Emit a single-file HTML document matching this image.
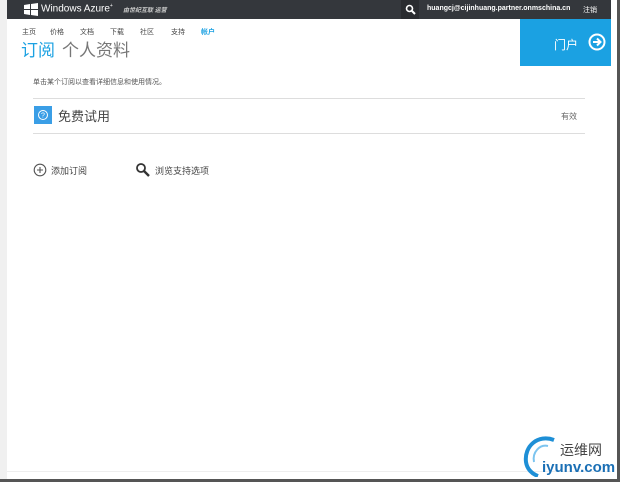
<!DOCTYPE html>
<html><head><meta charset="utf-8"><style>
body{margin:0;width:624px;height:484px;background:#fff;position:relative;overflow:hidden;font-family:"Liberation Sans","Noto Sans CJK SC",sans-serif;}
.a{position:absolute;white-space:nowrap;}
</style></head><body>
<div class="a" style="left:0;top:0;width:7px;height:480px;background:#f0f0f0;"></div>
<div class="a" style="left:7px;top:0;width:604px;height:19px;background:#34373c;"></div>
<div class="a" style="left:617px;top:0;width:3px;height:482px;background:#555;"></div>
<div class="a" style="left:0;top:479px;width:620px;height:3px;background:#555;"></div>
<div class="a" style="left:7px;top:471px;width:604px;height:1px;background:#eee;"></div>
<svg class="a" style="left:24px;top:3px" width="14" height="13" viewBox="0 0 14 13"><path d="M0 2l6-1v5H0zM7 1l7-1v6H7zM0 7h6v5l-6-1zM7 7h7v6l-7-1z" fill="#fff"/></svg>
<div class="a" style="left:41px;top:3px;font-size:10px;color:#fff;">Windows Azure<sup style="font-size:5px">+</sup></div>
<div class="a" style="left:123px;top:5px;font-size:6px;color:#ccc;font-style:italic;font-weight:bold;">由世纪互联 运营</div>
<div class="a" style="left:401px;top:0;width:18px;height:19px;background:#2a2c30;"></div>
<svg class="a" style="left:405px;top:4px" width="11" height="11"><circle cx="4.5" cy="4.5" r="3" stroke="#fff" stroke-width="1.6" fill="none"/><path d="M7 7l3 3" stroke="#fff" stroke-width="2"/></svg>
<div class="a" style="left:427px;top:5px;font-size:7px;color:#fff;font-weight:bold;">huangcj@cijinhuang.partner.onmschina.cn</div>
<div class="a" style="left:583px;top:5px;font-size:7px;color:#fff;">注销</div>
<div class="a" style="left:520px;top:19px;width:91px;height:47px;background:#1ba1e2;"></div>
<div class="a" style="left:554px;top:36px;font-size:12px;color:#fff;">门户</div>
<svg class="a" style="left:588px;top:33px" width="18" height="18"><circle cx="9" cy="9" r="7.5" stroke="#fff" stroke-width="2" fill="none"/><path d="M5 9h7M9 5.5L12.5 9 9 12.5" stroke="#fff" stroke-width="2" fill="none"/></svg>
<div class="a" style="left:22px;top:27px;font-size:7px;color:#444;">主页</div>
<div class="a" style="left:50px;top:27px;font-size:7px;color:#444;">价格</div>
<div class="a" style="left:80px;top:27px;font-size:7px;color:#444;">文档</div>
<div class="a" style="left:110px;top:27px;font-size:7px;color:#444;">下载</div>
<div class="a" style="left:140px;top:27px;font-size:7px;color:#444;">社区</div>
<div class="a" style="left:171px;top:27px;font-size:7px;color:#444;">支持</div>
<div class="a" style="left:201px;top:27px;font-size:7px;color:#1ba1e2;font-weight:bold;">帐户</div>
<div class="a" style="left:21px;top:36px;font-size:17px;color:#1ba1e2;">订阅</div>
<div class="a" style="left:62px;top:36px;font-size:17px;color:#777;">个人资料</div>
<div class="a" style="left:33px;top:77px;font-size:7px;color:#555;">单击某个订阅以查看详细信息和使用情况。</div>
<div class="a" style="left:33px;top:98px;width:552px;height:1px;background:#ddd;"></div>
<div class="a" style="left:33px;top:133px;width:552px;height:1px;background:#ddd;"></div>
<div class="a" style="left:34px;top:106px;width:18px;height:18px;background:#3a9ee6;"></div>
<svg class="a" style="left:37px;top:109px" width="12" height="12"><circle cx="6" cy="6" r="4.5" stroke="#fff" fill="none"/><text x="6" y="8.5" font-size="7" fill="#fff" text-anchor="middle" font-family="Liberation Sans">?</text></svg>
<div class="a" style="left:58px;top:106px;font-size:13px;color:#444;">免费试用</div>
<div class="a" style="left:561px;top:111px;font-size:8px;color:#666;">有效</div>
<svg class="a" style="left:33px;top:163px" width="14" height="14"><circle cx="7" cy="7" r="5.8" stroke="#555" stroke-width="1.1" fill="none"/><path d="M7 4v6M4 7h6" stroke="#555" stroke-width="1.1"/></svg>
<div class="a" style="left:51px;top:164px;font-size:9px;color:#444;">添加订阅</div>
<svg class="a" style="left:135px;top:162px" width="15" height="15"><circle cx="6" cy="6" r="4" stroke="#333" stroke-width="1.8" fill="none"/><path d="M9 9l5 5" stroke="#333" stroke-width="2.4"/></svg>
<div class="a" style="left:155px;top:164px;font-size:9px;color:#444;">浏览支持选项</div>
<svg class="a" style="left:518px;top:432px" width="40" height="45"><path d="M36 8C20 2 6 14 8 30c1 7 6 12 12 14" stroke="#1e8fd6" stroke-width="4" fill="none"/><path d="M30 14C22 12 14 20 16 30" stroke="#7cc4ef" stroke-width="2" fill="none"/></svg>
<div class="a" style="left:560px;top:440px;font-size:14px;color:#444;">运维网</div>
<div class="a" style="left:542px;top:459px;font-size:15px;color:#1a6fb5;font-weight:bold;">iyunv.com</div>
</body></html>
